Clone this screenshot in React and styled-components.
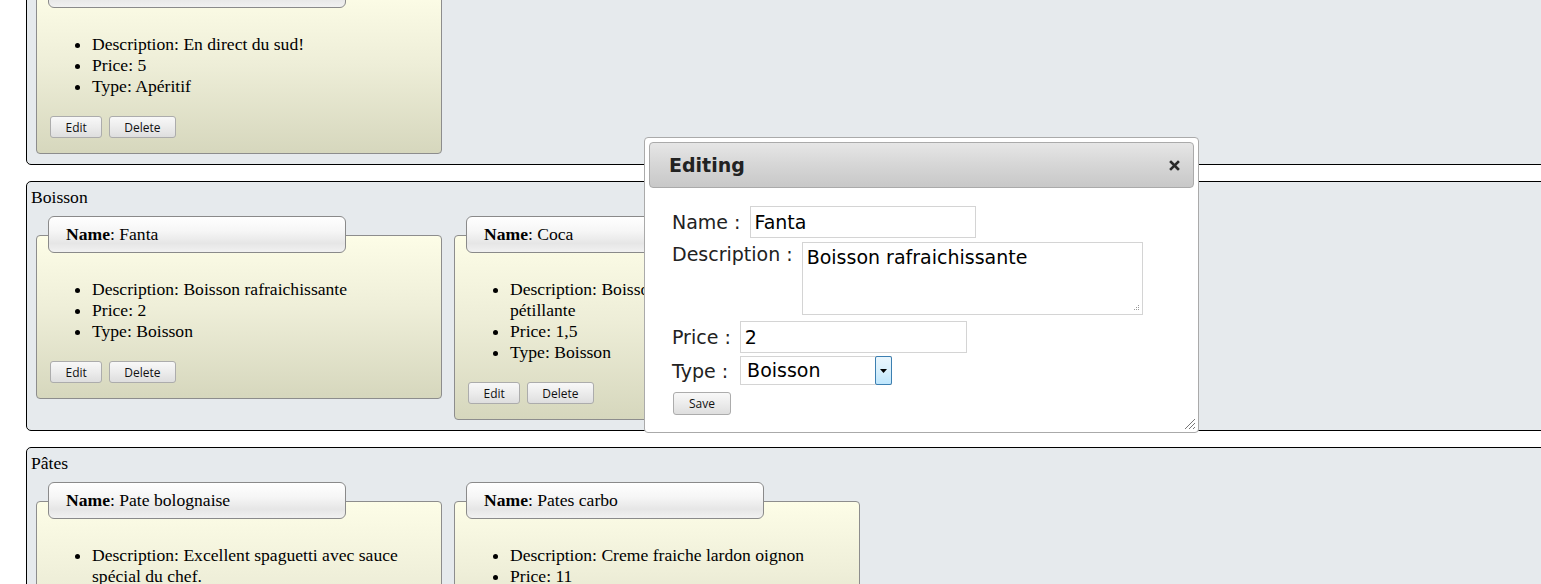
import React from 'react';
import styled, { createGlobalStyle } from 'styled-components';

const GlobalStyle = createGlobalStyle`
  html, body {
    margin: 0;
    padding: 0;
    background: #ffffff;
    overflow: hidden;
  }
  body {
    font-family: "Liberation Serif", "Times New Roman", serif;
    font-size: 17.6px;
    color: #000;
  }
`;

const Page = styled.div`
  padding-left: 26px;
  margin-top: -64px;   // the page is scrolled a bit
`;

const Category = styled.section`
  width: 100vw;
  box-sizing: border-box;
  border: 1px solid #000;
  border-radius: 5px;
  background: #e6eaed;
  padding: 6px 0 10px 4px;
  margin-bottom: 16px;
`;

const CategoryTitle = styled.div`
  line-height: 18px;
  height: 18px;
`;

const CardRow = styled.div`
  display: flex;
  align-items: flex-start;
  gap: 12px;
  margin-top: 10px;
  padding-left: 5px;
`;

const Card = styled.div`
  display: flex;
  flex-direction: column;
  width: 406px;
`;

const CardTab = styled.div`
  position: relative;
  z-index: 1;
  box-sizing: border-box;
  margin-left: 12px;
  width: 298px;
  height: 37px;
  padding-left: 17px;
  display: flex;
  align-items: center;
  border: 1px solid #8a8a8a;
  border-radius: 6px;
  background: linear-gradient(to bottom, #ffffff 0%, #f6f6f6 40%, #e6e6e6 75%, #f1f1f1 100%);
`;

const CardBody = styled.div`
  box-sizing: border-box;
  margin-top: -18px;
  padding: 27px 13px 15px 13px;
  border: 1px solid #8d8d8d;
  border-radius: 4px;
  background: linear-gradient(to bottom, #fdfde7 0%, #eeeed8 45%, #d6d7bd 100%);
`;

const Details = styled.ul`
  margin: 16px 0 19px 0;
  padding-left: 42px;
  line-height: 21px;
`;

const Actions = styled.div`
  display: flex;
  gap: 7px;
`;

const Button = styled.button`
  box-sizing: border-box;
  height: ${(p) => p.$h || 22}px;
  padding: 0 ${(p) => p.$pad || 14}px;
  font-family: "Open Sans", "Liberation Sans", sans-serif;
  font-size: 12px;
  color: #111;
  border: 1px solid #acacac;
  border-radius: 3px;
  background: linear-gradient(to bottom, #f8f8f8 0%, #ececec 50%, #dedede 100%);
  cursor: pointer;
`;

const Dialog = styled.div`
  position: absolute;
  z-index: 10;
  left: 644px;
  top: 137px;
  width: 555px;
  height: 296px;
  box-sizing: border-box;
  padding: 4px;
  border: 1px solid #aaaaaa;
  border-radius: 4px;
  background: #fff;
  font-family: "DejaVu Sans", Verdana, sans-serif;
`;

const TitleBar = styled.div`
  box-sizing: border-box;
  height: 46px;
  display: flex;
  align-items: center;
  justify-content: space-between;
  padding: 0 13px 0 19px;
  border: 1px solid #aaaaaa;
  border-radius: 4px;
  background: linear-gradient(to bottom, #e6e6e6 0%, #d6d6d6 50%, #c8c8c8 100%);
`;

const Title = styled.span`
  font-weight: bold;
  font-size: 19px;
  color: #222;
`;

const Form = styled.div`
  display: flex;
  flex-direction: column;
  align-items: flex-start;
  padding: 18px 0 0 23px;
`;

const FieldRow = styled.div`
  display: flex;
  align-items: ${(p) => (p.$top ? 'flex-start' : 'center')};
  gap: ${(p) => p.$gap || 9}px;
  margin-top: ${(p) => p.$mt || 0}px;
`;

const Label = styled.label`
  font-size: 19px;
  color: #222;
  line-height: 24px;
`;

const TextInput = styled.input`
  box-sizing: border-box;
  width: ${(p) => p.$w}px;
  height: 32px;
  padding: 0 4px;
  border: 1px solid #d4d4d4;
  font-family: "DejaVu Sans", Verdana, sans-serif;
  font-size: 19px;
  color: #000;
  outline: none;
`;

const AreaWrap = styled.div`
  position: relative;
  display: flex;
`;

const TextArea = styled.textarea`
  box-sizing: border-box;
  width: 341px;
  height: 73px;
  padding: 3px 4px;
  border: 1px solid #d4d4d4;
  font-family: "DejaVu Sans", Verdana, sans-serif;
  font-size: 19px;
  color: #000;
  resize: none;
  outline: none;
`;

const AreaGrip = styled.svg`
  position: absolute;
  right: 3px;
  bottom: 3px;
`;

const SelectBox = styled.div`
  box-sizing: border-box;
  width: 152px;
  height: 29px;
  display: flex;
  align-items: stretch;
  border: 1px solid #d4d4d4;
  border-right: none;
`;

const SelectValue = styled.span`
  flex: 1;
  padding-left: 6px;
  font-size: 19px;
  line-height: 27px;
  color: #000;
`;

const SelectArrow = styled.span`
  box-sizing: border-box;
  width: 17px;
  margin-top: -1px;
  margin-bottom: -1px;
  display: flex;
  align-items: center;
  justify-content: center;
  border: 1px solid #3c7fb1;
  border-radius: 2px;
  background: linear-gradient(to bottom, #eaf6fd 0%, #d9f0fc 50%, #bee6fd 100%);
`;

const Grip = styled.svg`
  position: absolute;
  right: 2px;
  bottom: 2px;
`;

const cards = [
  {
    category: 'Apéritif',
    items: [
      { name: 'Pastis', description: 'En direct du sud!', price: '5', type: 'Apéritif' },
    ],
  },
  {
    category: 'Boisson',
    items: [
      { name: 'Fanta', description: 'Boisson rafraichissante', price: '2', type: 'Boisson' },
      { name: 'Coca', description: 'Boisson gazeuse sucrée et pétillante', price: '1,5', type: 'Boisson' },
    ],
  },
  {
    category: 'Pâtes',
    items: [
      { name: 'Pate bolognaise', description: 'Excellent spaguetti avec sauce spécial du chef.', price: '9', type: 'Pâtes' },
      { name: 'Pates carbo', description: 'Creme fraiche lardon oignon', price: '11', type: 'Pâtes' },
    ],
  },
];

const ProductCard = ({ item }) => (
  <Card>
    <CardTab>
      <span><b>Name</b>: {item.name}</span>
    </CardTab>
    <CardBody>
      <Details>
        <li>Description: {item.description}</li>
        <li>Price: {item.price}</li>
        <li>Type: {item.type}</li>
      </Details>
      <Actions>
        <Button $pad={14.5}>Edit</Button>
        <Button>Delete</Button>
      </Actions>
    </CardBody>
  </Card>
);

const EditDialog = () => (
  <Dialog>
    <TitleBar>
      <Title>Editing</Title>
      <svg width="11" height="11" viewBox="0 0 11 11">
        <path d="M2 2 L9 9 M9 2 L2 9" stroke="#2a2a2a" strokeWidth="2.6" strokeLinecap="square" />
      </svg>
    </TitleBar>
    <Form>
      <FieldRow>
        <Label>Name :</Label>
        <TextInput $w={226} defaultValue="Fanta" />
      </FieldRow>
      <FieldRow $top $mt={4} $gap={9}>
        <Label>Description :</Label>
        <AreaWrap>
          <TextArea defaultValue="Boisson rafraichissante" />
          <AreaGrip width="7" height="7" viewBox="0 0 7 7">
            <g fill="#9a9a9a">
              <rect x="5" y="0" width="1" height="1" />
              <rect x="3" y="2" width="1" height="1" />
              <rect x="5" y="2" width="1" height="1" />
              <rect x="1" y="4" width="1" height="1" />
              <rect x="3" y="4" width="1" height="1" />
              <rect x="5" y="4" width="1" height="1" />
            </g>
          </AreaGrip>
        </AreaWrap>
      </FieldRow>
      <FieldRow $mt={6} $gap={9}>
        <Label>Price :</Label>
        <TextInput $w={227} defaultValue="2" />
      </FieldRow>
      <FieldRow $mt={3} $gap={12}>
        <Label>Type :</Label>
        <SelectBox>
          <SelectValue>Boisson</SelectValue>
          <SelectArrow>
            <svg width="7" height="4" viewBox="0 0 7 4">
              <path d="M0 0 H7 L3.5 4 Z" fill="#000" />
            </svg>
          </SelectArrow>
        </SelectBox>
      </FieldRow>
      <FieldRow $mt={7}>
        <Button $pad={15} $h={23} style={{ marginLeft: 1 }}>Save</Button>
      </FieldRow>
    </Form>
    <Grip width="12" height="12" viewBox="0 0 12 12">
      <path d="M11 1 L1 11 M11 5 L5 11 M11 9 L9 11" stroke="#777" strokeWidth="1" />
    </Grip>
  </Dialog>
);

const App = () => (
  <>
    <GlobalStyle />
    <Page>
      {cards.map((cat) => (
        <Category key={cat.category}>
          <CategoryTitle>{cat.category}</CategoryTitle>
          <CardRow>
            {cat.items.map((item) => (
              <ProductCard key={item.name} item={item} />
            ))}
          </CardRow>
        </Category>
      ))}
    </Page>
    <EditDialog />
  </>
);

export default App;
